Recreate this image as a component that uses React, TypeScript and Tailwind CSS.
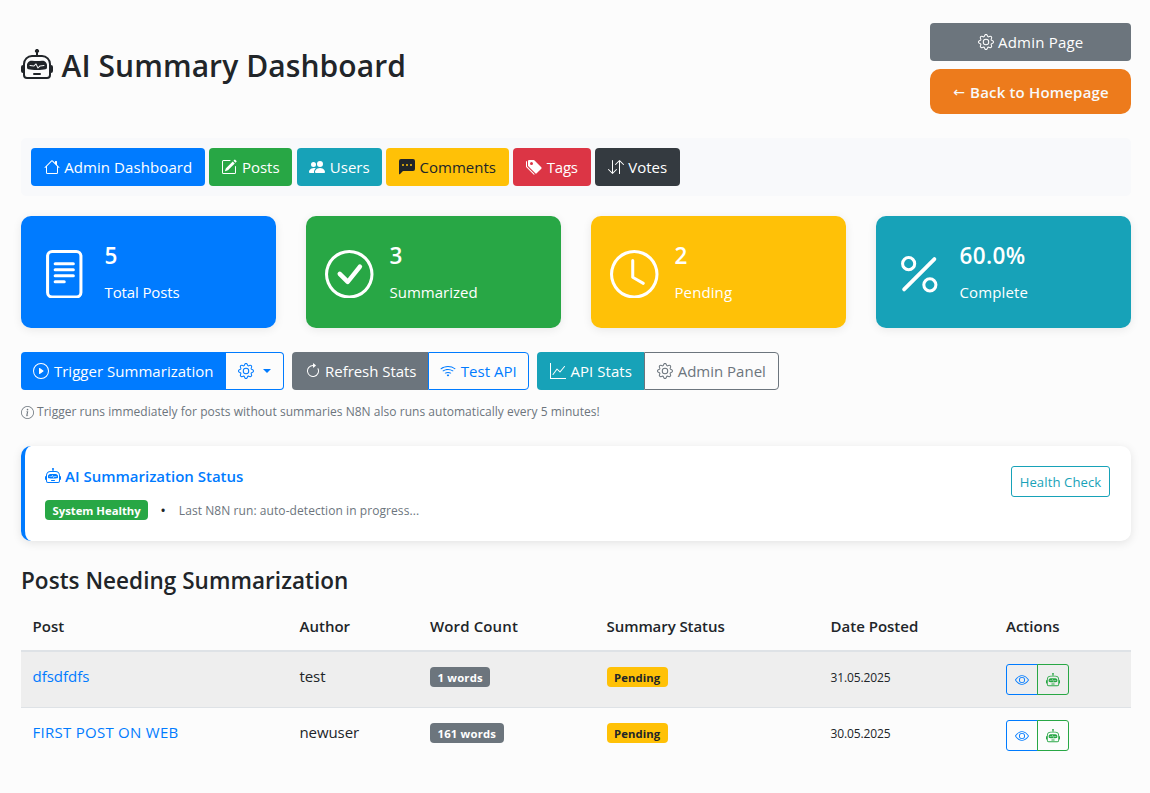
import React from "react";
import type { ReactNode } from "react";
import type { IconType } from "react-icons";
import {
  BsArrowClockwise,
  BsArrowDownUp,
  BsChatLeftDotsFill,
  BsCheckCircle,
  BsClock,
  BsEye,
  BsFileText,
  BsGear,
  BsGraphUp,
  BsHouse,
  BsInfoCircle,
  BsPencilSquare,
  BsPeopleFill,
  BsPercent,
  BsPlayCircle,
  BsRobot,
  BsTagsFill,
  BsWifi,
} from "react-icons/bs";

type ButtonProps = { icon?: IconType; className: string; children: ReactNode };

function Button({ icon: Icon, className, children }: ButtonProps) {
  return (
    <button
      className={`flex h-[38px] shrink-0 items-center justify-center gap-[4.5px] whitespace-nowrap ${className}`}
    >
      {Icon && <Icon className="size-4 shrink-0" />}
      <span className="leading-6">{children}</span>
    </button>
  );
}

type StatProps = {
  icon: IconType;
  value: string;
  label: string;
  className: string;
  valueClass?: string;
  labelClass?: string;
};

function StatCard({ icon: Icon, value, label, className, valueClass = "", labelClass = "" }: StatProps) {
  return (
    <div
      className={`flex h-28 items-center gap-4 rounded-[10px] pl-[19px] text-white shadow-[0_2px_10px_rgba(0,0,0,0.08)] ${className}`}
    >
      <Icon className="mt-1 size-[48.5px] shrink-0" />
      <div>
        <div className={`text-[22.5px] leading-[29px] font-semibold ${valueClass}`}>{value}</div>
        <div className={`mt-2.5 leading-6 ${labelClass}`}>{label}</div>
      </div>
    </div>
  );
}

function Badge({ className, children }: { className: string; children: ReactNode }) {
  return (
    <span
      className={`flex h-5 w-fit items-center rounded px-[7.5px] text-[11.3px] font-bold whitespace-nowrap ${className}`}
    >
      <span className="pt-[3px]">{children}</span>
    </span>
  );
}

const posts = [
  {
    title: "dfsdfdfs",
    titleClass: "",
    author: "test",
    words: "1 words",
    date: "31.05.2025",
    row: "h-[55px] bg-[#eeeeee]",
  },
  {
    title: "FIRST POST ON WEB",
    titleClass: "tracking-[0.27px]",
    author: "newuser",
    words: "161 words",
    date: "30.05.2025",
    row: "h-14 border-t border-[#dee2e6]",
  },
];

const columns = "grid grid-cols-[267px_130.5px_176.5px_224px_175.5px_1fr] pl-[11.5px]";

export default function App() {
  return (
    <div className="min-h-[793px] bg-[#fcfcfc] pr-[19px] pl-[21px] font-['Open_Sans',sans-serif] text-[15px] text-[#212529]">
      <header className="flex justify-between pt-[23px]">
        <h1 className="flex h-[84px] items-center gap-[9px] text-[30px] font-semibold tracking-[0.08px]">
          <BsRobot className="-mt-px -ml-[0.5px] size-8" />
          AI Summary Dashboard
        </h1>
        <div className="flex w-[201px] flex-col gap-2">
          <Button icon={BsGear} className="rounded bg-[#6c757d] tracking-[0.2px] text-white">
            Admin Page
          </Button>
          <button className="flex h-[45px] items-center justify-center gap-[5px] rounded-[10px] bg-[#ed7b1c] pt-0.5 pl-px font-semibold tracking-[0.18px] text-[#f8f9fa]">
            <span className="font-['DejaVu_Sans'] text-[14px] font-normal">←</span>
            Back to Homepage
          </button>
        </div>
      </header>

      <nav className="mt-6 flex h-[58px] items-center gap-1 rounded-[5px] bg-[#f8f9fb] pl-2.5 text-white">
        <Button icon={BsHouse} className="w-[174px] rounded bg-[#007bff] tracking-[0.09px]">Admin Dashboard</Button>
        <Button icon={BsPencilSquare} className="w-[83px] rounded bg-[#28a745]">Posts</Button>
        <Button icon={BsPeopleFill} className="ml-px w-[85px] rounded bg-[#17a2b8]">Users</Button>
        <Button icon={BsChatLeftDotsFill} className="w-[123px] rounded bg-[#ffc107] text-[#212529]">Comments</Button>
        <Button icon={BsTagsFill} className="w-[78px] rounded bg-[#dc3545] tracking-[-0.2px]">Tags</Button>
        <Button icon={BsArrowDownUp} className="w-[85px] rounded bg-[#343a40]">Votes</Button>
      </nav>

      <section className="mt-5 grid grid-cols-4 gap-[30px]">
        <StatCard icon={BsFileText} value="5" label="Total Posts" className="bg-[#007bff]" labelClass="tracking-[-0.12px]" />
        <StatCard icon={BsCheckCircle} value="3" label="Summarized" className="bg-[#28a745]" />
        <StatCard icon={BsClock} value="2" label="Pending" className="bg-[#ffc107]" labelClass="tracking-[0.1px]" />
        <StatCard
          icon={BsPercent}
          value="60.0%"
          label="Complete"
          className="bg-[#17a2b8]"
          valueClass="tracking-[0.35px]"
          labelClass="tracking-[0.13px]"
        />
      </section>

      <section className="mt-6 flex gap-2">
        <div className="flex">
          <Button icon={BsPlayCircle} className="w-[205px] rounded-l bg-[#007bff] tracking-[0.03px] text-white">
            Trigger Summarization
          </Button>
          <button className="flex h-[38px] w-[58px] items-center gap-[9px] rounded-r border border-l-0 border-[#007bff] pl-3 text-[#007bff]">
            <BsGear className="size-4" />
            <span className="border-x-4 border-t-4 border-x-transparent border-t-[#007bff]" />
          </button>
        </div>
        <div className="flex">
          <Button icon={BsArrowClockwise} className="w-[136px] rounded-l bg-[#6c757d] pl-px tracking-[-0.04px] text-white">
            Refresh Stats
          </Button>
          <Button icon={BsWifi} className="w-[101px] rounded-r border border-[#007bff] text-[#007bff]">
            Test API
          </Button>
        </div>
        <div className="flex">
          <Button icon={BsGraphUp} className="w-[107px] rounded-l bg-[#17a2b8] pl-px tracking-[0.05px] text-white">
            API Stats
          </Button>
          <Button icon={BsGear} className="w-[135px] rounded-r border border-[#6c757d] text-[#6c757d]">
            Admin Panel
          </Button>
        </div>
      </section>

      <p className="mt-3 flex h-5 items-center gap-[3px] text-[12px] tracking-[0.03px] whitespace-nowrap text-[#6c757d]">
        <BsInfoCircle className="size-[13px]" />
        Trigger runs immediately for posts without summaries N8N also runs automatically every 5 minutes!
      </p>

      <section className="mt-6 flex h-[95px] justify-between rounded-[10px] border-l-4 border-[#007bff] bg-white pt-5 pr-[21px] pl-5 shadow-[0_2px_10px_rgba(0,0,0,0.1)]">
        <div>
          <h2 className="flex h-5 items-center gap-1 font-semibold text-[#007bff]">
            <BsRobot className="-mt-px size-4" />
            AI Summarization Status
          </h2>
          <div className="mt-3.5 flex h-5 items-center">
            <Badge className="bg-[#28a745] text-white">System Healthy</Badge>
            <span className="ml-3 text-[15px]">•</span>
            <span className="ml-[13px] pt-0.5 text-[12px] tracking-[0.07px] text-[#6c757d]">
              Last N8N run: auto-detection in progress...
            </span>
          </div>
        </div>
        <button className="flex h-[31px] w-[99px] items-center justify-center rounded-[3px] border border-[#17a2b8] pt-0.5 text-[13.1px] tracking-[0.1px] whitespace-nowrap text-[#17a2b8]">
          Health Check
        </button>
      </section>

      <h2 className="mt-[25px] text-[22.5px] leading-[29px] font-semibold tracking-[0.04px]">
        Posts Needing Summarization
      </h2>

      <div className="mt-[7px]">
        <div className={`${columns} h-[50px] items-center border-b-2 border-[#dee2e6] font-semibold`}>
          <span>Post</span>
          <span>Author</span>
          <span className="tracking-[0.13px]">Word Count</span>
          <span className="tracking-[-0.07px]">Summary Status</span>
          <span>Date Posted</span>
          <span>Actions</span>
        </div>
        {posts.map((post) => (
          <div key={post.title} className={`${columns} items-start pt-3 ${post.row}`}>
            <a className={`leading-6 text-[#007bff] ${post.titleClass}`}>{post.title}</a>
            <span className="leading-6 tracking-[-0.08px]">{post.author}</span>
            <div className="pt-[3px]">
              <Badge className="bg-[#6c757d] tracking-[0.2px] text-white">{post.words}</Badge>
            </div>
            <div className="pt-[3px]">
              <Badge className="bg-[#ffc107] tracking-[0.1px] text-[#212529]">Pending</Badge>
            </div>
            <span className="pt-0.5 text-[12px] leading-6 tracking-[-0.12px]">{post.date}</span>
            <div className="flex">
              <button className="flex h-[31px] w-8 items-center justify-center rounded-l-[3px] border border-[#007bff] text-[#007bff]">
                <BsEye className="size-3.5" />
              </button>
              <button className="-ml-px flex h-[31px] w-8 items-center justify-center rounded-r-[3px] border border-[#28a745] text-[#28a745]">
                <BsRobot className="size-3.5" />
              </button>
            </div>
          </div>
        ))}
      </div>
    </div>
  );
}
